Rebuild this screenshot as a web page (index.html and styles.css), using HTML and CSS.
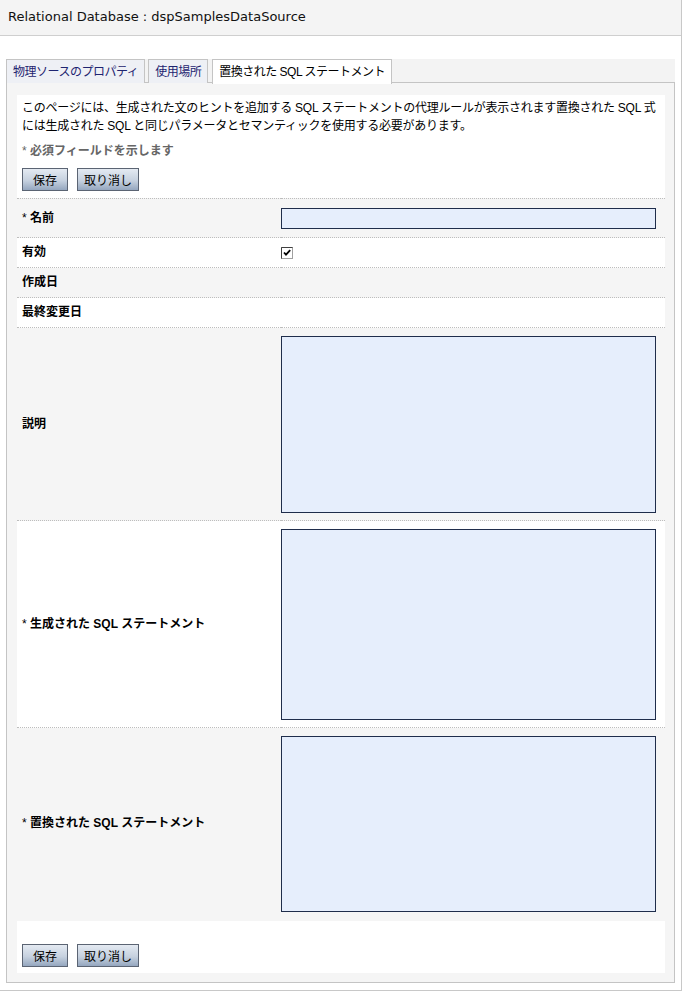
FILE: index.html
```html
<!DOCTYPE html>
<html lang="ja">
<head>
    <meta charset="UTF-8">
    <title>Relational Database : dspSamplesDataSource</title>
    <link rel="stylesheet" href="styles.css">
</head>
<body>
    <div class="page">
        <div class="page-header">Relational Database : dspSamplesDataSource</div>

        <div class="tab-area">
            <ul class="tabs">
                <li class="tab"><a href="#">物理ソースのプロパティ</a></li>
                <li class="tab"><a href="#">使用場所</a></li>
                <li class="tab active"><a href="#">置換された SQL ステートメント</a></li>
            </ul>

            <div class="panel">
                <div class="intro">
                    <p class="desc">このページには、生成された文のヒントを追加する SQL ステートメントの代理ルールが表示されます置換された SQL 式には生成された SQL と同じパラメータとセマンティックを使用する必要があります。</p>
                    <p class="required"><span class="star">*</span> 必須フィールドを示します</p>
                    <div class="buttons">
                        <button type="button">保存</button>
                        <button type="button">取り消し</button>
                    </div>
                </div>

                <table class="form-table">
                    <tr>
                        <th><span class="star">*</span> 名前</th>
                        <td><input type="text" class="text-input"></td>
                    </tr>
                    <tr class="white">
                        <th>有効</th>
                        <td>
                            <span class="checkbox">
                                <svg width="12" height="12" viewBox="0 0 12 12">
                                    <rect x="0.5" y="0.5" width="11" height="11" fill="#fff" stroke="#a0a0a0"/>
                                    <path d="M0.5 11.5V0.5H11.5" fill="none" stroke="#404040"/>
                                    <path d="M3 5.5l2 2.2L9.2 3.2" fill="none" stroke="#000" stroke-width="1.8"/>
                                </svg>
                            </span>
                        </td>
                    </tr>
                    <tr>
                        <th>作成日</th>
                        <td></td>
                    </tr>
                    <tr class="white">
                        <th>最終変更日</th>
                        <td></td>
                    </tr>
                    <tr>
                        <th>説明</th>
                        <td><textarea class="ta-desc"></textarea></td>
                    </tr>
                    <tr class="white">
                        <th><span class="star">*</span> 生成された SQL ステートメント</th>
                        <td><textarea class="ta-gen"></textarea></td>
                    </tr>
                    <tr>
                        <th><span class="star">*</span> 置換された SQL ステートメント</th>
                        <td><textarea class="ta-rep"></textarea></td>
                    </tr>
                </table>

                <div class="footer-buttons">
                    <button type="button">保存</button>
                    <button type="button">取り消し</button>
                </div>
            </div>
        </div>
    </div>
</body>
</html>
```

FILE: styles.css
```css
body {
    margin: 0;
    background-color: #fff;
    font-family: "Liberation Sans", "Noto Sans CJK JP", sans-serif;
    font-size: 12px;
    color: #000;
}
.page {
    width: 681px;
    height: 990px;
    border-right: 1px solid #c8c8c8;
    border-bottom: 1px solid #c8c8c8;
}
.page-header {
    height: 35px;
    line-height: 34px;
    padding-left: 8px;
    background-color: #f4f4f4;
    border-bottom: 1px solid #cfcfcf;
    font-family: "DejaVu Sans", sans-serif;
    font-size: 13px;
    color: #111;
}
.tab-area {
    margin: 23px 6px 0 6px;
}
.tabs {
    display: flex;
    gap: 3px;
    list-style: none;
    margin: 0;
    padding: 0;
    height: 24px;
    background-color: #f3f3f3;
}
.tab {
    height: 23px;
    border: 1px solid #c4c4c4;
    border-bottom: none;
    background-color: #eef0f5;
}
.tab a {
    display: block;
    padding: 0 6px;
    line-height: 24px;
    letter-spacing: -0.5px;
    color: #1e2470;
    text-decoration: none;
}
.tab.active {
    position: relative;
    height: 24px;
    margin-left: 1px;
    background-color: #fff;
    z-index: 1;
}
.tab.active a {
    color: #000;
}
.panel {
    border: 1px solid #c4c4c4;
    margin-top: -1px;
    background-color: #f5f5f5;
    padding: 12px 9px 9px 10px;
}
.intro {
    background-color: #fff;
    padding: 4px 0 7px 5px;
}
.desc {
    margin: 0;
    line-height: 18px;
    letter-spacing: -0.25px;
}
.required {
    margin: 7px 0 0 0;
    line-height: 18px;
    color: #666;
    font-weight: bold;
}
.required .star {
    font-weight: normal;
}
.buttons {
    margin-top: 8px;
    display: flex;
    gap: 9px;
}
button {
    min-width: 46px;
    height: 23px;
    padding: 0 6px;
    border: 1px solid #5b6473;
    background: linear-gradient(#e4eaf2, #c6d1df 55%, #95a7bf);
    font-family: "Liberation Sans", "Noto Sans CJK JP", sans-serif;
    font-size: 12px;
    color: #000;
    cursor: pointer;
}
.form-table {
    width: 100%;
    border-collapse: collapse;
}
.form-table tr {
    border-top: 1px dotted #bdbdbd;
}
.form-table tr.white {
    background-color: #fff;
}
.form-table th {
    width: 259px;
    padding: 8px 0 8px 5px;
    text-align: left;
    font-weight: bold;
    line-height: 13px;
    vertical-align: middle;
}
.form-table th .star {
    font-weight: normal;
}
.form-table td {
    padding: 8px 8px 7px 0;
    line-height: 13px;
    vertical-align: middle;
}
.text-input,
textarea {
    display: block;
    box-sizing: border-box;
    width: 375px;
    margin: 0;
    border: 1px solid #1f2d4b;
    background-color: #e6eefc;
    font-family: "Liberation Sans", "Noto Sans CJK JP", sans-serif;
    font-size: 12px;
    resize: none;
}
.text-input {
    height: 21px;
    margin: 1px 0;
}
.checkbox {
    display: block;
    width: 12px;
    height: 12px;
}
.checkbox svg {
    display: block;
}
.ta-desc {
    height: 177px;
}
.ta-gen {
    height: 191px;
}
.ta-rep {
    height: 176px;
}
.footer-buttons {
    margin-top: 2px;
    background-color: #fff;
    padding: 23px 0 6px 5px;
    display: flex;
    gap: 9px;
}
```
